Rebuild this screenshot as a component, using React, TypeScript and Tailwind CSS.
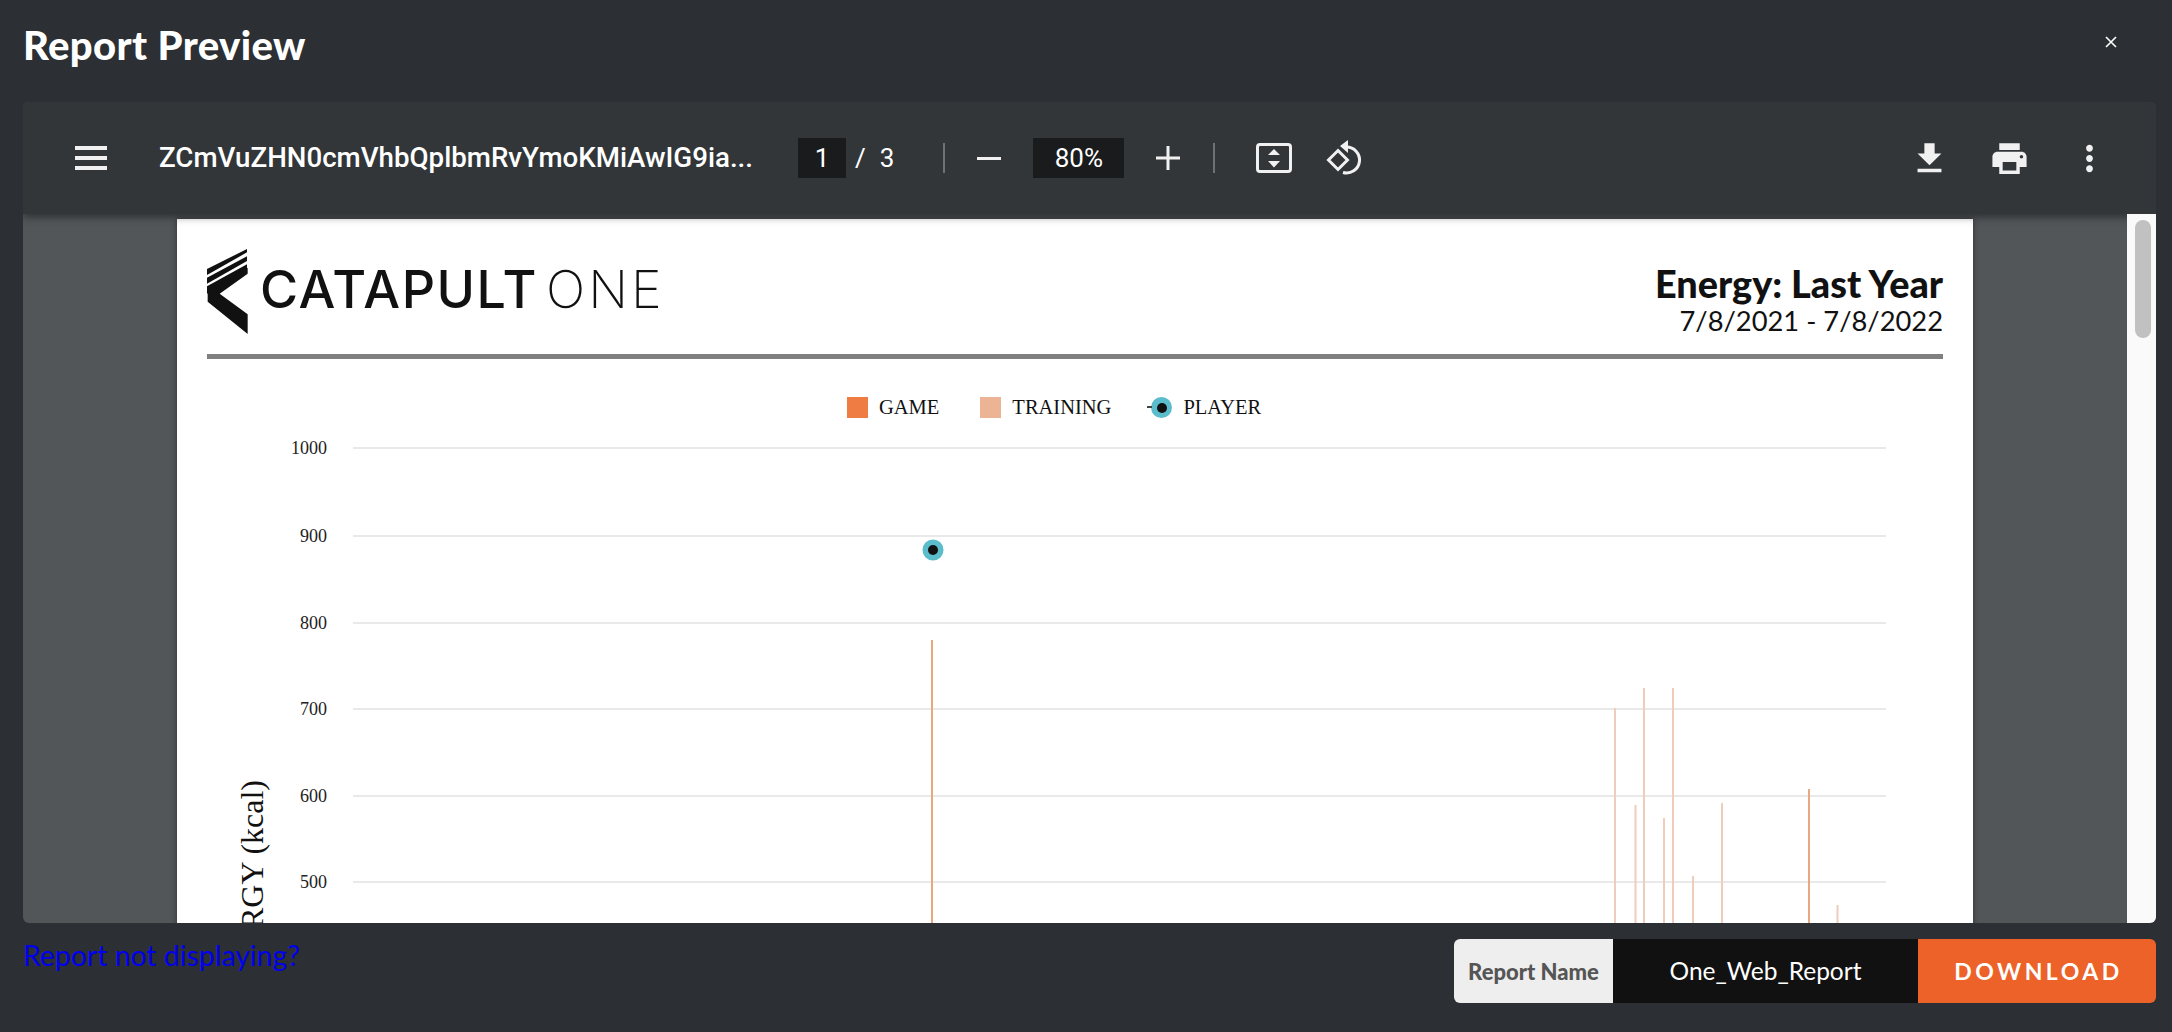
const ticks = [
  { label: "1000", y: 448 },
  { label: "900", y: 536 },
  { label: "800", y: 623 },
  { label: "700", y: 709 },
  { label: "600", y: 796 },
  { label: "500", y: 882 },
];

const trainingBars = [
  { x: 1615, top: 708 },
  { x: 1635.5, top: 805 },
  { x: 1644, top: 688 },
  { x: 1664, top: 818 },
  { x: 1673, top: 688 },
  { x: 1693, top: 876 },
  { x: 1722, top: 803 },
  { x: 1837.5, top: 905 },
];

const gameBars = [
  { x: 932, top: 640 },
  { x: 1809, top: 789 },
];

function CatapultMark() {
  return (
    <svg width="42" height="85" viewBox="0 0 126 255" className="shrink-0">
      <g fill="#111">
        <path d="M0 60 L120 0 L120 10 L0 78 Z" />
        <path d="M0 86 L120 22 L120 36 L0 104 Z" />
        <path d="M0 112 L120 46 L120 60 L32 118 L0 134 Z" />
        <path d="M2 128 L122 56 L122 74 L38 134 L122 196 L122 255 L2 158 Z" />
      </g>
    </svg>
  );
}

function Chart() {
  return (
    <svg width="1796" height="493" viewBox="177 430 1796 493" className="block">
      {ticks.map((t) => (
        <g key={t.label}>
          <line x1="353" x2="1886" y1={t.y} y2={t.y} stroke="#e9e9e9" strokeWidth="2" />
          <text
            x="327"
            y={t.y + 6}
            textAnchor="end"
            fill="#222"
            className="font-['Liberation_Serif',serif] text-[18px]"
          >
            {t.label}
          </text>
        </g>
      ))}
      <text
        x="263"
        y="780"
        textAnchor="end"
        transform="rotate(-90 263 780)"
        fill="#111"
        className="font-['Liberation_Serif',serif] text-[32px]"
      >
        ENERGY (kcal)
      </text>
      {trainingBars.map((b) => (
        <line key={b.x} x1={b.x} x2={b.x} y1={b.top} y2="923" stroke="#f0cdbb" strokeWidth="2" />
      ))}
      {gameBars.map((b) => (
        <line key={b.x} x1={b.x} x2={b.x} y1={b.top} y2="923" stroke="#e9a884" strokeWidth="2" />
      ))}
      <circle cx="933" cy="550" r="10.5" fill="#5bbccb" />
      <circle cx="933" cy="550" r="5" fill="#111" />
    </svg>
  );
}

function Toolbar() {
  return (
    <div className="relative z-10 flex h-[112px] shrink-0 items-center bg-[#323639] font-['Roboto',sans-serif] text-white shadow-[0_3px_8px_rgba(0,0,0,0.45)]">
      <div className="ml-[52px] flex w-[32px] flex-col gap-[6px]">
        <div className="h-[4px] bg-[#f1f1f1]" />
        <div className="h-[4px] bg-[#f1f1f1]" />
        <div className="h-[4px] bg-[#f1f1f1]" />
      </div>
      <div className="ml-[52px] w-[639px] shrink-0 text-[27.7px] font-medium">
        ZCmVuZHN0cmVhbQplbmRvYmoKMiAwIG9ia...
      </div>
      <div className="flex h-[40px] w-[48px] items-center justify-center bg-[#191b1c] text-[26px]">1</div>
      <span className="ml-[9px] text-[26px]">/</span>
      <span className="ml-[14px] text-[26px]">3</span>
      <div className="ml-[49px] h-[30px] w-[2px] bg-[#6f7275]" />
      <div className="ml-[32px] h-[3px] w-[24px] bg-[#f1f1f1]" />
      <div className="ml-[32px] flex h-[40px] w-[91px] items-center justify-center bg-[#191b1c] text-[26px]">80%</div>
      <svg width="24" height="24" viewBox="0 0 24 24" className="ml-[32px]" fill="#f1f1f1">
        <path d="M10.5 0h3v10.5H24v3H13.5V24h-3V13.5H0v-3h10.5z" />
      </svg>
      <div className="ml-[33px] h-[30px] w-[2px] bg-[#6f7275]" />
      <svg width="36" height="30" viewBox="0 0 36 30" className="ml-[41px]" fill="none">
        <rect x="1.5" y="1.5" width="33" height="27" rx="2.5" stroke="#f1f1f1" strokeWidth="3" />
        <path d="M18 6 L24 12 H12 Z M18 24.5 L24 18 H12 Z" fill="#f1f1f1" />
      </svg>
      <svg width="42" height="40" viewBox="0 0 42 40" className="ml-[33px]" fill="none">
        <path d="M13 12.5 L22.5 22 L13 31.5 L3.5 22 Z" stroke="#f1f1f1" strokeWidth="3" />
        <path d="M21 9 A13 13 0 1 1 18 34.5" stroke="#f1f1f1" strokeWidth="3" />
        <path d="M15 8 L23 2 L23 15 Z" fill="#f1f1f1" />
      </svg>
      <div className="ml-auto mr-[46px] flex items-center">
        <svg width="41" height="41" viewBox="0 0 24 24" fill="#f1f1f1">
          <path d="M19 9h-4V3H9v6H5l7 7 7-7zM5 18v2h14v-2H5z" />
        </svg>
        <svg width="41" height="41" viewBox="0 0 24 24" fill="#f1f1f1" className="ml-[39px]">
          <path d="M19 8H5c-1.66 0-3 1.34-3 3v6h4v4h12v-4h4v-6c0-1.66-1.34-3-3-3zm-3 11H8v-5h8v5zm3-7c-.55 0-1-.45-1-1s.45-1 1-1 1 .45 1 1-.45 1-1 1zm-1-9H6v4h12V3z" />
        </svg>
        <svg width="41" height="41" viewBox="0 0 24 24" fill="#f1f1f1" className="ml-[39px]">
          <path d="M12 8c1.1 0 2-.9 2-2s-.9-2-2-2-2 .9-2 2 .9 2 2 2zm0 2c-1.1 0-2 .9-2 2s.9 2 2 2 2-.9 2-2-.9-2-2-2zm0 6c-1.1 0-2 .9-2 2s.9 2 2 2 2-.9 2-2-.9-2-2-2z" />
        </svg>
      </div>
    </div>
  );
}

function ReportPage() {
  return (
    <div className="mx-auto mt-[5px] h-[800px] w-[1796px] bg-white shadow-[0_0_6px_rgba(0,0,0,0.4)]">
      <div className="h-[140px] px-[30px] pt-[30px]">
        <div className="flex h-[105px] items-start justify-between">
          <div className="flex items-start">
            <CatapultMark />
            <div className="ml-[11px] mt-[11px] flex items-baseline font-['Inter',sans-serif] text-[52px] leading-[60px] text-[#111]">
              <span className="font-medium tracking-[1.5px]">CATAPULT</span>
              <span className="ml-[8px] font-extralight tracking-[3px]">ONE</span>
            </div>
          </div>
          <div className="mt-[16px] text-right font-['Lato',sans-serif] text-[#111]">
            <div className="text-[37.8px] font-black leading-[38px]">Energy: Last Year</div>
            <div className="text-[27.3px] leading-[36px]">7/8/2021 - 7/8/2022</div>
          </div>
        </div>
        <div className="h-[5px] bg-[#808080]" />
      </div>
      <div className="ml-[670px] flex h-[71px] items-center pt-[26px] font-['Liberation_Serif',serif] text-[20.5px] text-[#111]">
        <div className="h-[21px] w-[21px] bg-[#ef7c42]" />
        <span className="ml-[11px]">GAME</span>
        <div className="ml-[41px] h-[21px] w-[21px] bg-[#edb395]" />
        <span className="ml-[11px]">TRAINING</span>
        <div className="relative ml-[40px] flex h-[21px] w-[21px] items-center justify-center rounded-full bg-[#5bbccb]">
          <div className="absolute -left-[4px] top-[9px] h-[2px] w-[5px] bg-[#444]" />
          <div className="h-[10px] w-[10px] rounded-full bg-[#111]" />
        </div>
        <span className="ml-[11px]">PLAYER</span>
      </div>
      <Chart />
    </div>
  );
}

export default function App() {
  return (
    <div className="flex h-screen w-full flex-col overflow-hidden bg-[#2c2f33] font-['Lato',sans-serif]">
      <div className="flex h-[102px] shrink-0 items-start justify-between px-[23px]">
        <h1 className="mt-[21px] text-[40px] font-black leading-[48px] tracking-[0.4px] text-white">Report Preview</h1>
        <svg width="12" height="12" viewBox="0 0 12 12" className="mr-[32px] mt-[36px]" stroke="#fff" strokeWidth="1.6">
          <path d="M1 1 L11 11 M11 1 L1 11" />
        </svg>
      </div>

      <div className="ml-[23px] mr-[16px] flex h-[821px] shrink-0 flex-col overflow-hidden rounded-[6px] bg-[#525659]">
        <Toolbar />
        <div className="flex min-h-0 flex-1">
          <div className="min-w-0 flex-1 overflow-hidden">
            <ReportPage />
          </div>
          <div className="relative z-20 w-[29px] shrink-0 bg-[#fafafa] pl-[8px] pt-[6px]">
            <div className="h-[118px] w-[16px] rounded-full bg-[#c1c1c1]" />
          </div>
        </div>
      </div>

      <div className="flex flex-1 items-start justify-between pl-[23px] pr-[16px]">
        <a href="#" className="mt-[14px] text-[28.4px] leading-[36px] text-[#0000ee]">
          Report not displaying?
        </a>
        <div className="mt-[16px] flex h-[64px] overflow-hidden rounded-[6px]">
          <div className="flex w-[159px] items-center justify-center bg-[#eeeeee] text-[22px] font-black text-[#555]">
            Report Name
          </div>
          <div className="flex w-[305px] items-center justify-center bg-[#111111] text-[24.5px] text-white">
            One_Web_Report
          </div>
          <div className="flex w-[238px] items-center justify-center bg-[#ec6229] pl-[3px] text-[23px] font-bold tracking-[3.5px] text-white">
            DOWNLOAD
          </div>
        </div>
      </div>
    </div>
  );
}
